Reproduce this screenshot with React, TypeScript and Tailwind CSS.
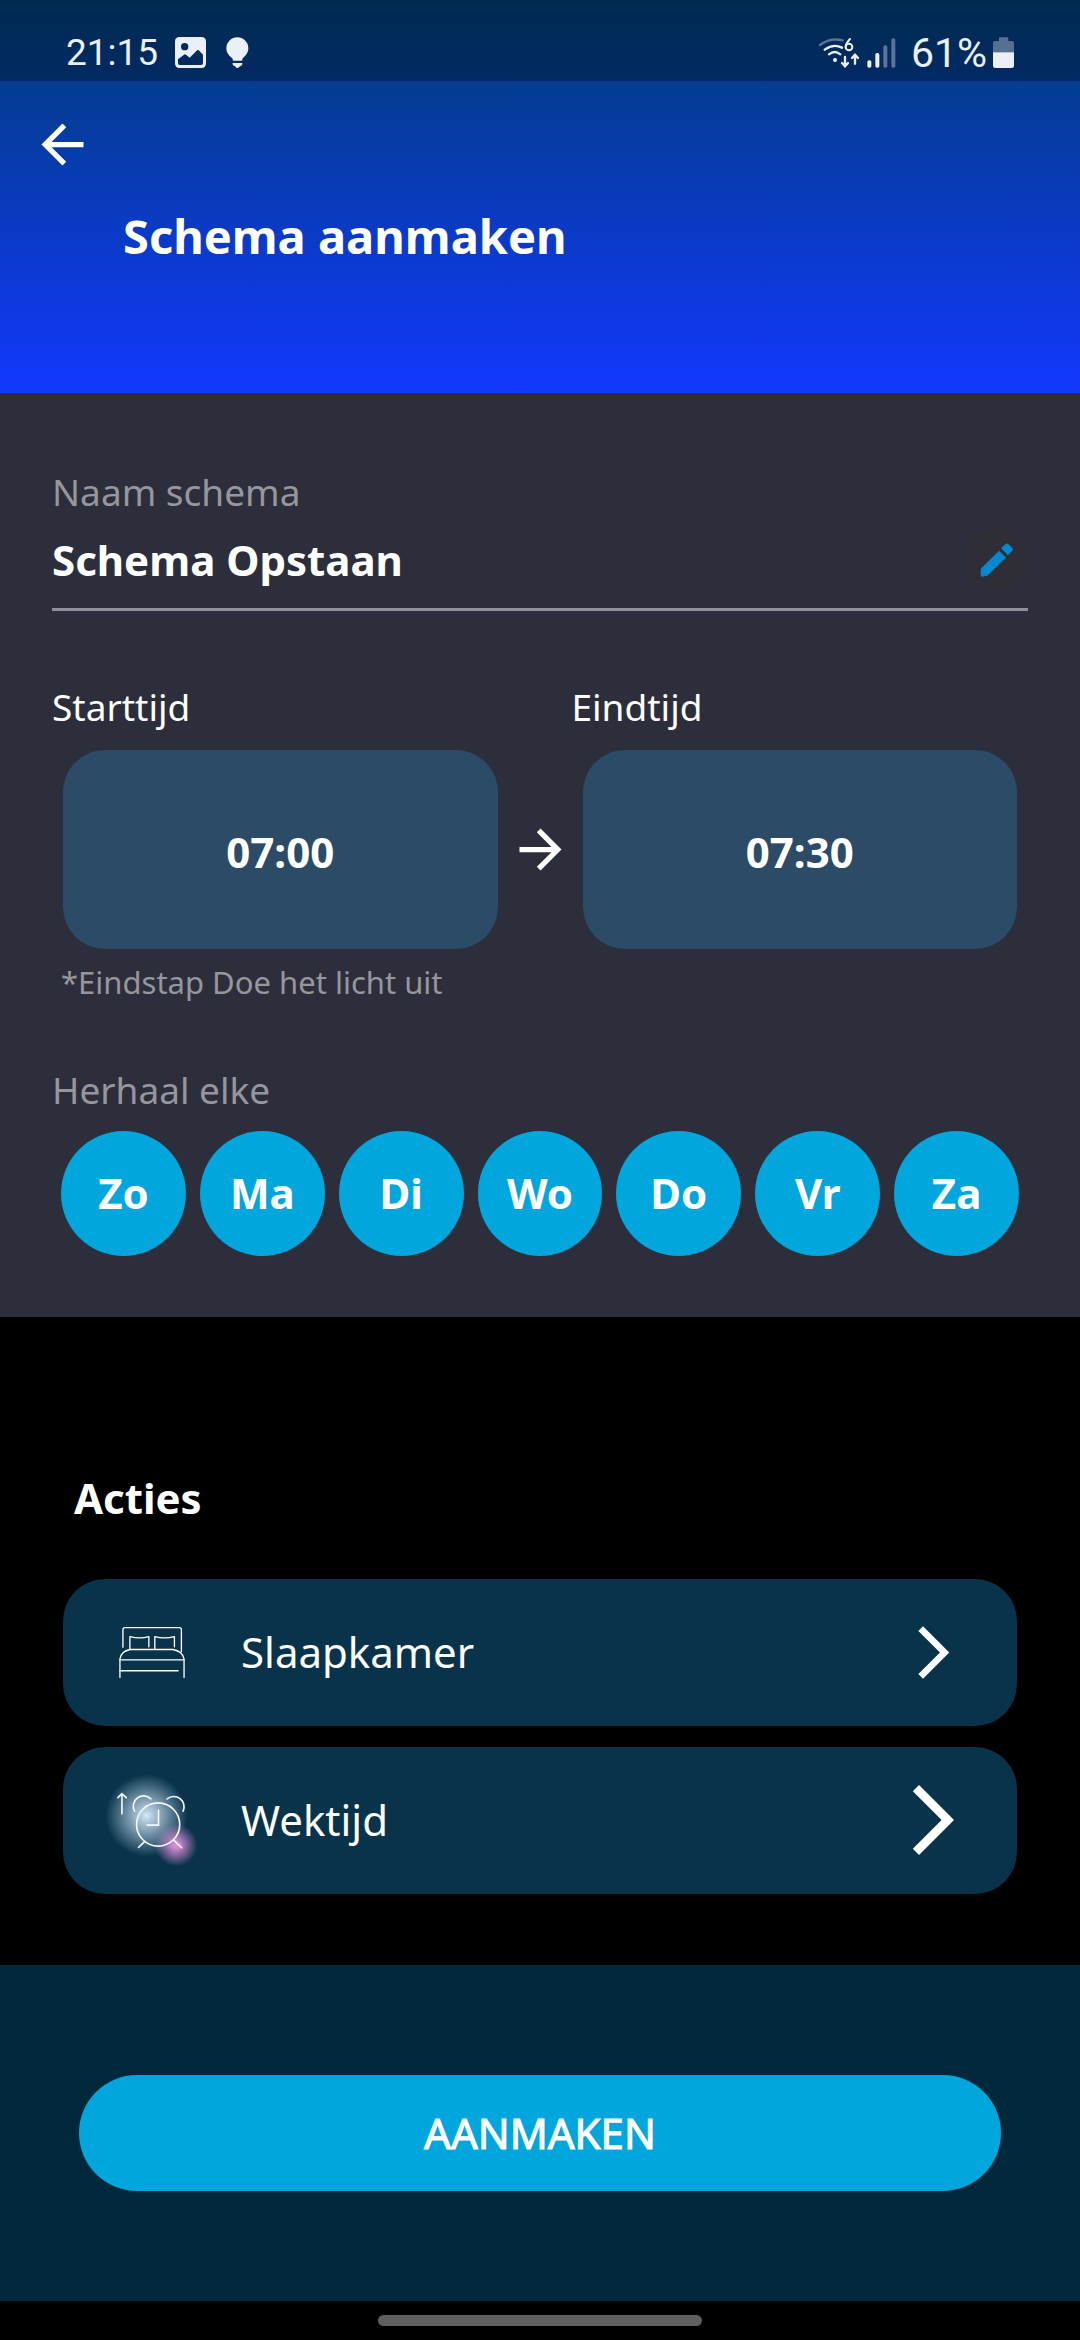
import React, { useState } from 'react';

const DAYS = ['Zo', 'Ma', 'Di', 'Wo', 'Do', 'Vr', 'Za'];

const StatusBar: React.FC = () => (
  <div className="flex h-[81px] items-center justify-between bg-black/30 px-[66px] pt-6 font-['Roboto',sans-serif] text-[37px] leading-[48px] text-[#ebeff7]">
    <div className="flex items-center">
      <span>21:15</span>
      <svg className="ml-[17px] h-[31px] w-[31px]" viewBox="0 0 93 93" fill="none">
        <path
          fillRule="evenodd"
          fill="#ebeff7"
          d="M14 0H79Q93 0 93 14V79Q93 93 79 93H14Q0 93 0 79V14Q0 0 14 0ZM29 18A11 11 0 1 0 29 40A11 11 0 1 0 29 18ZM9 67V78Q9 84 15 84H78Q84 84 84 78V53L71 40Q68 38 65 41L44 62L33 53Q30 50 27 53Z"
        />
      </svg>
      <svg className="ml-5 h-[32px] w-[23px]" viewBox="0 0 69 96" fill="#ebeff7">
        <path d="M34 1A33 33 0 0 1 67 34C67 50 56 58 49 65V69Q49 71 46 71H23Q20 71 20 69V65C12 58 1 50 1 34A33 33 0 0 1 34 1Z" />
        <path d="M20 78H49V82Q48 87 42 88L37 92Q34 94 31 92L27 88Q21 87 20 82Z" />
      </svg>
    </div>
    <div className="flex items-center">
      <svg className="h-[32px] w-[42px]" viewBox="0 0 126 96" fill="none" stroke="#ebeff7" strokeLinecap="round" strokeWidth="7">
        <path d="M6 24Q36 1 74 10" stroke="#5b7398" />
        <path d="M20 38Q46 19 72 32" />
        <path d="M33 52Q50 38 67 52" />
        <circle cx="51" cy="69" r="4" strokeWidth="4" fill="#ebeff7" />
        <path d="M96 6Q84 19 83 29" strokeWidth="6" />
        <circle cx="93" cy="30" r="10" strokeWidth="6" />
        <path d="M81 60V86M72 78L81 88L90 78" />
        <path d="M111 80V54M102 63L111 53L120 63" />
      </svg>
      <svg className="ml-[7px] h-[30px] w-[29px]" viewBox="0 0 87 90" fill="#ebeff7">
        <rect x="1" y="67" width="12" height="22" rx="5" />
        <rect x="25" y="45" width="12" height="44" rx="5" />
        <rect x="49" y="22" width="12" height="67" rx="5" fill="#5b7398" />
        <rect x="73" y="1" width="12" height="88" rx="5" fill="#5b7398" />
      </svg>
      <span className="ml-[15px] text-[41px]">61%</span>
      <svg className="ml-[6px] h-[32px] w-[21px]" viewBox="0 0 63 96">
        <path d="M18 3Q18 1 21 1H43Q46 1 46 4V12H57Q63 12 63 18V46H0V18Q0 12 6 12H18Z" fill="#56708f" />
        <path d="M0 46H63V86Q63 93 56 93H7Q0 93 0 86Z" fill="#ebeff7" />
      </svg>
    </div>
  </div>
);

const ChevronIcon: React.FC<{ className: string }> = ({ className }) => (
  <svg className={className} viewBox="0 0 24 24" fill="white">
    <path d="M6.23 20.23L8 22l10-10L8 2 6.23 3.77 14.46 12z" />
  </svg>
);

const BedIcon: React.FC = () => (
  <svg className="size-[93px] shrink-0" viewBox="76 50 280 280" fill="none" stroke="white" strokeWidth="4" strokeLinecap="round" strokeLinejoin="round">
    <path d="M130 174V121Q130 115 136 115H300Q306 115 306 121V188" />
    <path d="M151 180V142Q180 150 208 142V173" />
    <path d="M226 180V142Q255 150 285 142V173" />
    <path d="M121 265V210Q124 186 152 181H280Q310 186 314 210V265" />
    <path d="M121 212H314M121 245H296" />
  </svg>
);

const AlarmIcon: React.FC = () => (
  <svg className="size-[93px] shrink-0" viewBox="76 552 280 280" fill="none" stroke="#f2f7fb" strokeWidth="5" strokeLinecap="round">
    <defs>
      <radialGradient id="glow-white">
        <stop offset="0" stopColor="#d3ebfb" />
        <stop offset="0.12" stopColor="#cfe4f5" stopOpacity="0.88" />
        <stop offset="1" stopColor="#cfe4f5" stopOpacity="0" />
      </radialGradient>
      <radialGradient id="glow-pink">
        <stop offset="0" stopColor="#e58be0" />
        <stop offset="0.2" stopColor="#dc8cda" stopOpacity="0.9" />
        <stop offset="1" stopColor="#dc8cda" stopOpacity="0" />
      </radialGradient>
    </defs>
    <circle cx="201" cy="677" r="124" fill="url(#glow-white)" stroke="none" />
    <circle cx="290" cy="766" r="64" fill="url(#glow-pink)" stroke="none" />
    <circle cx="236" cy="704" r="65" />
    <path d="M237 661V706H203" />
    <path d="M196 755L177 773M283 751L307 774" />
    <path d="M165 664A31 31 0 0 1 214 627" />
    <path d="M263 627A31 31 0 0 1 311 664" />
    <path d="M127 672V611M115 623L127 611L140 623" />
  </svg>
);

interface TimeFieldProps {
  id: string;
  label: string;
  value: string;
}

const TimeField: React.FC<TimeFieldProps> = ({ id, label, value }) => (
  <div className="flex-1">
    <div id={id} className="text-[37px] leading-[48px]">{label}</div>
    <div className="mx-[11px] mt-[19px] flex">
      <button
        aria-describedby={id}
        className="h-[199px] flex-1 rounded-[42px] bg-[#2c4b67] pt-1 text-[42px] leading-[56px] font-bold"
      >
        {value}
      </button>
    </div>
  </div>
);

interface ActionRowProps {
  icon: React.ReactNode;
  label: string;
  chevronClass: string;
}

const ActionRow: React.FC<ActionRowProps> = ({ icon, label, chevronClass }) => (
  <button className="flex h-[147px] w-full items-center rounded-[42px] bg-[#08334b] px-[42px] text-left">
    {icon}
    <span className="ml-[43px] flex-1 text-[42px] leading-[56px]">{label}</span>
    <span className="flex w-[84px] justify-center">
      <ChevronIcon className={chevronClass} />
    </span>
  </button>
);

const App: React.FC = () => {
  const [name, setName] = useState('Schema Opstaan');
  const [selected, setSelected] = useState<string[]>(DAYS);

  const toggleDay = (day: string) => {
    setSelected(selected.includes(day) ? selected.filter((d) => d !== day) : [...selected, day]);
  };

  return (
    <div className="flex min-h-screen flex-col bg-black font-['Noto_Sans',sans-serif] text-white">
      <header className="bg-linear-to-b/srgb from-[#003e73] to-[#1238ff] pb-[125px]">
        <StatusBar />
        <button aria-label="Terug" className="mt-8 ml-[31px] block">
          <svg className="size-[63px]" viewBox="0 0 24 24" fill="white">
            <path d="M20 11H7.83l5.59-5.59L12 4l-8 8 8 8 1.41-1.41L7.83 13H20v-2z" />
          </svg>
        </button>
        <h1 className="mt-7 ml-[123px] text-[47px] leading-[64px] font-bold">Schema aanmaken</h1>
      </header>

      <section className="bg-[#2d2e3b] px-[52px] pt-[75px] pb-[61px]">
        <label htmlFor="schema-name" className="block text-[37px] leading-[48px] text-[#96969d]">
          Naam schema
        </label>
        <div className="mt-3 flex items-center border-b-3 border-[#8f909a] pb-[17px]">
          <input
            id="schema-name"
            value={name}
            onChange={(e) => setName(e.target.value)}
            className="h-[56px] min-w-0 flex-1 bg-transparent text-[42px] leading-[56px] font-bold outline-none"
          />
          <button aria-label="Naam wijzigen" className="flex size-[63px] items-center justify-center rounded-full bg-[#2f2e37]">
            <svg className="size-[34px]" viewBox="0 0 98 98" fill="#0288d1">
              <path d="M55 22L75 42L25 91Q22 95 17 95L5 97Q2 97 2 94V78Q2 74 5 71Z" />
              <path d="M61 15L71 5Q77-1 83 4L92 13Q97 18 92 24L80 35Z" />
            </svg>
          </button>
        </div>

        <div className="mt-[72px] flex items-end">
          <TimeField id="start-label" label="Starttijd" value="07:00" />
          <div className="flex h-[199px] items-center">
            <svg className="size-[63px]" viewBox="0 0 24 24" fill="white">
              <path d="M12 4l-1.41 1.41L16.17 11H4v2h12.17l-5.58 5.59L12 20l8-8z" />
            </svg>
          </div>
          <TimeField id="end-label" label="Eindtijd" value="07:30" />
        </div>
        <p className="mt-[13px] ml-[9px] text-[31px] leading-[40px] text-[#96969d]">*Eindstap Doe het licht uit</p>

        <h2 className="mt-16 text-[37px] leading-[48px] text-[#96969d]">Herhaal elke</h2>
        <div className="mx-[9px] mt-[17px] flex gap-[14px]">
          {DAYS.map((day) => (
            <button
              key={day}
              aria-pressed={selected.includes(day)}
              onClick={() => toggleDay(day)}
              className="aspect-square flex-1 rounded-full bg-[#01a7dc] text-[42px] leading-[56px] font-bold aria-[pressed=false]:bg-[#2c4b67]"
            >
              {day}
            </button>
          ))}
        </div>
      </section>

      <section className="flex-1 px-[63px] pt-[153px] pb-[71px]">
        <h2 className="ml-[11px] text-[42px] leading-[56px] font-bold">Acties</h2>
        <div className="mt-[53px] flex flex-col gap-[21px]">
          <ActionRow icon={<BedIcon />} label="Slaapkamer" chevronClass="size-[63px]" />
          <ActionRow icon={<AlarmIcon />} label="Wektijd" chevronClass="size-[84px]" />
        </div>
      </section>

      <footer>
        <div className="flex bg-[#00273a] px-[79px] py-[110px]">
          <button className="h-[116px] flex-1 rounded-full bg-[#01a7dc] text-[42px] leading-[56px] [-webkit-text-stroke:1px_white]">
            AANMAKEN
          </button>
        </div>
        <div className="flex h-[39px] items-center justify-center">
          <div className="h-[11px] w-[30%] rounded-full bg-[#5f5f5f]" />
        </div>
      </footer>
    </div>
  );
};

export default App;
